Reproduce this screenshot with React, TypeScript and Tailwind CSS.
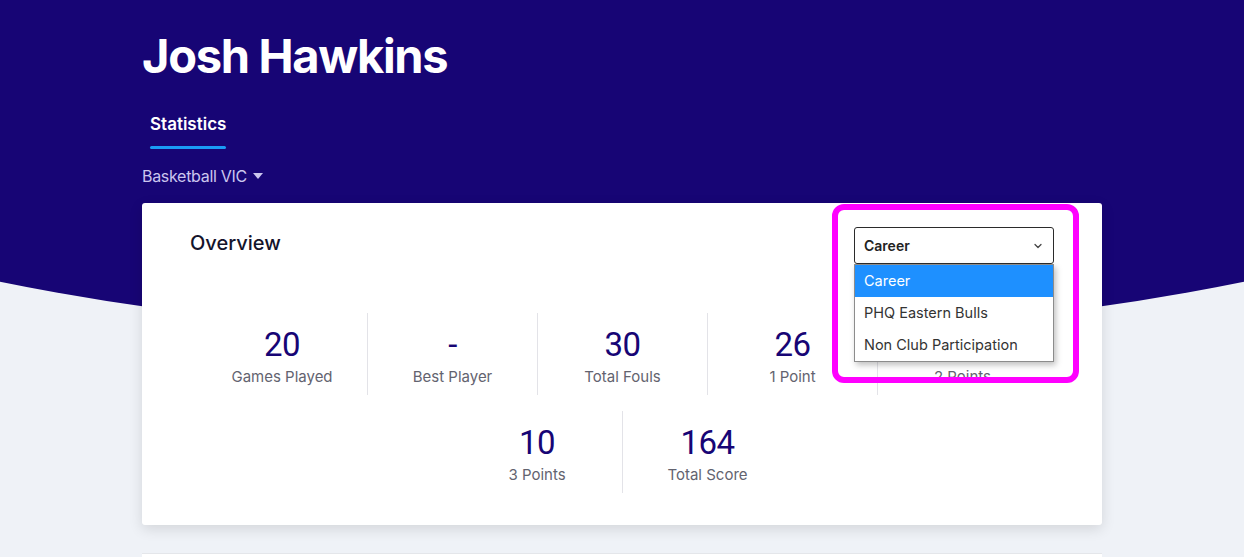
import { ChevronDown } from "lucide-react";

const stats = [
  { value: "20", label: "Games Played" },
  { value: "-", label: "Best Player" },
  { value: "30", label: "Total Fouls" },
  { value: "26", label: "1 Point" },
  { value: "54", label: "2 Points" },
];

const stats2 = [
  { value: "10", label: "3 Points" },
  { value: "164", label: "Total Score" },
];

const options = ["Career", "PHQ Eastern Bulls", "Non Club Participation"];

const StatItem = ({ value, label, first }: { value: string; label: string; first: boolean }) => (
  <div
    className={`w-[170px] h-[82px] flex flex-col items-center pt-[14px] ${
      first ? "" : "border-l border-[#e3e3e8]"
    }`}
  >
    <div className="text-[33px] leading-[36px] text-[#170575] font-['Roboto',sans-serif] tracking-[-0.5px]">
      {value}
    </div>
    <div className="mt-[5px] text-[15px] leading-[18px] text-[#63636f]">{label}</div>
  </div>
);

const App = () => {
  return (
    <div className="relative w-full h-[557px] overflow-hidden bg-[#eff2f7] font-['Inter',sans-serif]">
      {/* curved header background */}
      <div className="absolute left-1/2 -translate-x-1/2 top-[-466px] w-[2400px] h-[806px] rounded-[50%] bg-[#170575]" />

      <div className="relative w-[960px] mx-auto pt-[26px]">
        <h1 className="text-[47px] leading-[60px] font-bold text-white tracking-[-1.3px]">
          Josh Hawkins
        </h1>

        <div className="mt-[26px] pl-[8px]">
          <div className="inline-flex flex-col">
            <span className="text-[17px] leading-[24px] font-semibold text-white">Statistics</span>
            <span className="mt-[10px] h-[3px] rounded-full bg-[#1a9bf5]" />
          </div>
        </div>

        <div className="mt-[16px] flex items-center gap-[6px] text-[16px] leading-[22px] text-[#cbc6ee] tracking-[-0.3px]">
          Basketball VIC
          <svg width="10" height="6" viewBox="0 0 10 6">
            <path d="M0 0h10L5 6z" fill="#cbc6ee" />
          </svg>
        </div>

        <div className="mt-[16px] h-[322px] bg-white rounded-[3px] shadow-[0_4px_14px_rgba(0,0,0,0.12)] relative">
          <div className="flex items-start justify-between pl-[48px] pr-[48px] pt-[24px]">
            <h2 className="mt-[3px] text-[20px] leading-[26px] font-medium text-[#14142b]">Overview</h2>
            <div className="relative w-[200px]">
              <div className="h-[37px] border border-[#2b2b2b] rounded-[3px] flex items-center justify-between px-[9px]">
                <span className="text-[14px] font-semibold text-[#222]">Career</span>
                <ChevronDown size={12} strokeWidth={2.5} className="text-[#444]" />
              </div>
              <div className="absolute left-0 top-[37px] w-[200px] bg-white border border-[#8c8c8c] shadow-[2px_3px_6px_rgba(0,0,0,0.25)] z-10">
                {options.map((o, i) => (
                  <div
                    key={o}
                    className={`h-[32px] px-[9px] flex items-center text-[14.5px] ${
                      i === 0 ? "bg-[#1e90ff] text-white" : "text-[#333]"
                    }`}
                  >
                    {o}
                  </div>
                ))}
              </div>
            </div>
          </div>

          <div className="mt-[49px] flex flex-col items-center gap-[16px]">
            <div className="flex">
              {stats.map((s, i) => (
                <StatItem key={s.label} value={s.value} label={s.label} first={i === 0} />
              ))}
            </div>
            <div className="flex">
              {stats2.map((s, i) => (
                <StatItem key={s.label} value={s.value} label={s.label} first={i === 0} />
              ))}
            </div>
          </div>

          {/* highlight annotation */}
          <div className="absolute left-[690px] top-[1px] w-[247px] h-[179px] border-[6px] border-[#ff00ff] rounded-[12px] z-20 pointer-events-none" />
        </div>

        <div className="mt-[28px] h-[20px] bg-white border-t border-[#e4e6ea]" />
      </div>
    </div>
  );
};

export default App;
